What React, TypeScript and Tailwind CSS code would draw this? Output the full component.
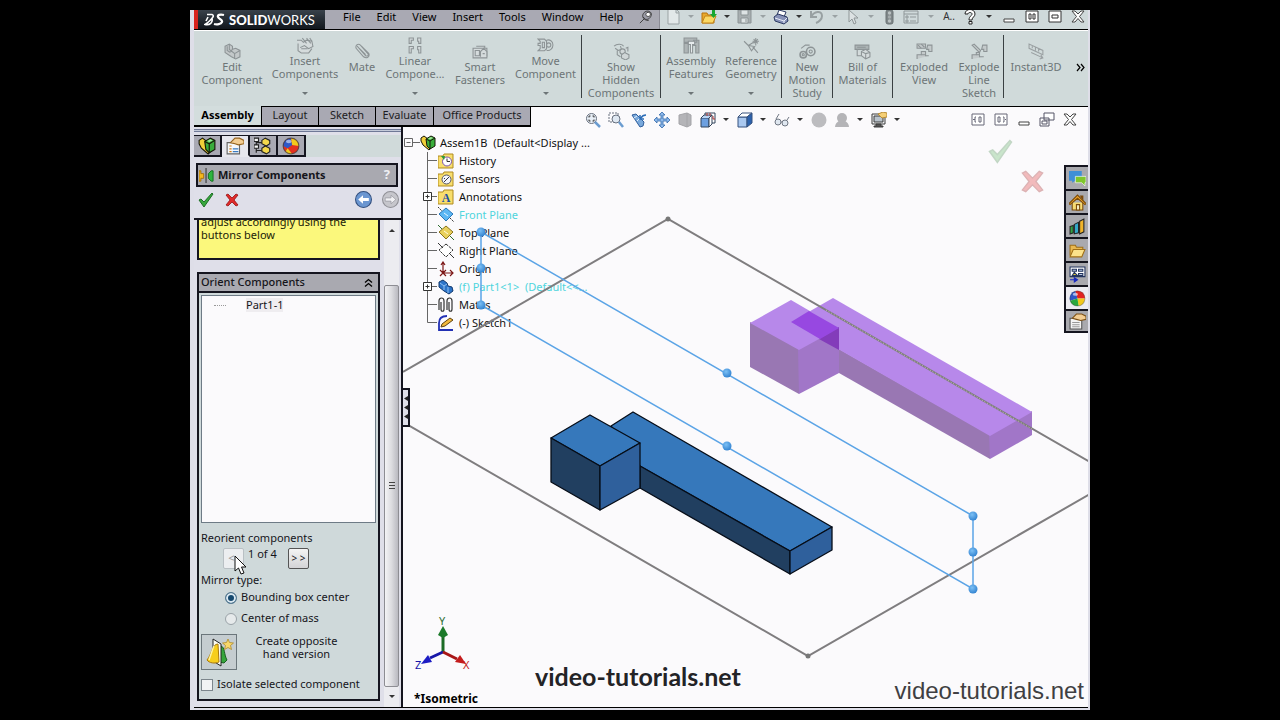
import React, { useState } from 'react';
import { clsx } from 'clsx';

type IconName = keyof typeof icons;

const icons = {
  // ribbon
  editPart: (
    <g fill="#c3c8c9" stroke="#8d9496">
      <path d="M1 3l4-2 3 2v3l3-1 4 2v6l-4 2-4-2-6-4z" />
      <path d="M5 1v5l5 4v5M10 10l5-3M3 3v4l3 2M8 6l-2 2" fill="none" />
    </g>
  ),
  insertPart: (
    <g fill="#d5dbdc" stroke="#8d9496">
      <path d="M1 6v7l3 2h7l3-4M0 3h4l2 2 3-2 5 1 1 5-4 2-4-3-4 2" />
      <path d="M5 1l4 5M9 1l4 5M12 1l2 3M4 11h6" fill="none" />
    </g>
  ),
  clip: (
    <path d="M3 3l8 9c2 1 3-1 2-2L6 2C4 0 1 2 2 5l7 8c3 2 6 0 5-3L7 3M5 5l6 6" fill="none" stroke="#8d9496" />
  ),
  pattern: (
    <g fill="#d5dbdc" stroke="#8d9496">
      <path d="M2 1h4v2H4v3H2zM10 1h3v5h-2V4h-1zM2 9h4v2H4v4H2zM10 9h3v6h-2v-3h-1z" />
    </g>
  ),
  smart: (
    <g fill="#d5dbdc" stroke="#8d9496">
      <path d="M1 5h13v9H1zM4 3h8v2" />
      <path d="M3 7h4v5H3zM8 13V8l3-3 3 3v5M10 10h2" />
    </g>
  ),
  move: (
    <g fill="none" stroke="#8d9496">
      <path d="M1 2h6l2 2v7l-2 2H1l2-2V8H1V6h2V4zM9 3c3-1 6 1 6 4.500s-3 6-6 5M5 5h2v5H5z" />
      <circle cx="11" cy="7.500" r="2" />
    </g>
  ),
  hidden: (
    <g fill="#d0d6d7" stroke="#8d9496">
      <path d="M1 3c3-3 8-2 9 0M2 5l3 2 3-1-1-3M4 7v4l3 2" fill="none" />
      <circle cx="9" cy="8" r="2.500" />
      <path d="M8 11l3-2 4 2v3l-3 2-4-2zM12 5l2-1v4" />
    </g>
  ),
  feature: (
    <g fill="#aeb5b6" stroke="#8d9496">
      <path d="M1 1h12v4H1zM1 6h4v9H1zM10 3h5v12h-3V8h-2z" />
      <path d="M5 4h6v3H9v8H7V7H5z" fill="#e6ebec" />
    </g>
  ),
  refGeo: (
    <g fill="none" stroke="#8d9496">
      <path d="M1 4l4 4 5-3M5 8l3 5 3-4zM9 9l5 6M12 1v7M9 4h6M10 2l4 4M14 2l-4 4" />
    </g>
  ),
  gears: (
    <g fill="none" stroke="#8d9496">
      <circle cx="11" cy="8" r="4" strokeWidth="1.500" />
      <circle cx="11" cy="8" r="1.500" />
      <circle cx="4" cy="11" r="3" strokeWidth="1.500" />
      <circle cx="4" cy="11" r="1" />
      <path d="M2 5l4-3 4 0" />
    </g>
  ),
  bom: (
    <g fill="#d5dbdc" stroke="#8d9496">
      <path d="M1 2h13v4H1z" fill="#adb4b5" />
      <path d="M3 4h8M3 6v6h4M7 8l4-2 4 3v4l-4 2-4-3zM11 10v5M7 8l4 2 4-1" />
    </g>
  ),
  explode: (
    <g fill="#c4cacb" stroke="#8d9496">
      <path d="M1 1h8v4H1zM11 2h4v6h-3V6h-2zM1 15v-4h4v-3h4v4h3" />
      <path d="M2 2l3 3M5 1l3 3M5 11h4" fill="none" />
    </g>
  ),
  explodeLine: (
    <g fill="#c4cacb" stroke="#8d9496">
      <path d="M1 2l2-1 6 6-1 2zM11 2h4v6h-3V6h-2zM1 15v-4h4v-2h3v4h4" />
      <path d="M5 11h3" fill="none" />
    </g>
  ),
  instant: (
    <path d="M1 1v4l13 6V7zM4 3v2M7 4v3M10 5v3M3 9l11 5M12 11l2 3-3 1" fill="none" stroke="#9aa0a2" />
  ),

  // title bar
  pin: (
    <g stroke="#333">
      <path d="M7 2c3-2 8 0 7 4s-5 6-8 4-2-6 1-8z" fill="#9b9ba6" />
      <path d="M9 3c2-1 4 0 4 2s-2 3-4 2-1-3 0-4z" fill="#fff" />
      <path d="M1 15l5-5M5 8c1 3 3 4 6 4" fill="none" />
    </g>
  ),
  newDoc: <path d="M3 0h8l3 3v12H3zM11 0v4h3" fill="#e2e8e9" stroke="#9ba3a5" />,
  open: (
    <g>
      <path d="M1 14V4h5l1 2h6v8z" fill="#e9a92c" stroke="#b8730d" />
      <path d="M1 14l3-7h11l-3 7z" fill="#fbd863" stroke="#c3851b" />
      <path d="M11 1h3v4h2l-3.500 4L9 5h2z" fill="#19a831" />
    </g>
  ),
  save: (
    <g stroke="#8c9496">
      <path d="M1 1h13v13H1z" fill="#a7aeb0" />
      <path d="M4 1h7v5H4zM4 9h7v5H4z" fill="#dde3e4" />
      <path d="M9 10v3" />
    </g>
  ),
  print: (
    <g stroke="#2c3a63">
      <path d="M4 6l2-5 7 2-2 5z" fill="#fff" />
      <path d="M1 8l4-3 9 3 1 4-4 3-9-3z" fill="#8792b8" />
      <path d="M2 9l9 3 3-3M11 12v2" fill="none" stroke="#e8ecf8" />
    </g>
  ),
  undo: <path d="M2 2v6h6M2 8C5 2 13 1 13 7c0 3-3 6-6 7" fill="none" stroke="#98a0a2" strokeWidth="2" />,
  arrow: <path d="M4 1v12l3-3 2 5 2-1-2-5h4z" fill="#dce2e3" stroke="#8f9799" />,
  light: (
    <g>
      <rect x="5" y="1" width="7" height="14" rx="2" fill="#7e8688" stroke="#6a7274" />
      <circle cx="8.500" cy="4" r="1.700" fill="#b9c0c1" />
      <circle cx="8.500" cy="8" r="1.700" fill="#a5acad" />
      <circle cx="8.500" cy="12" r="1.700" fill="#b9c0c1" />
    </g>
  ),
  list: (
    <g fill="none" stroke="#8f9799">
      <path d="M1 2h14v12H1zM1 5h14" />
      <path d="M3 7h2v2H3zM3 11h2v2H3zM7 8h6M7 12h6" />
    </g>
  ),
  help: (
    <g fill="none" stroke="#222">
      <path d="M3 5c0-6 10-6 10 0 0 3-3 3-3 6H7c0-4 3-4 3-6s-4-2-4 0z" fill="#fff" />
      <path d="M7 12.500h3v2.500H7z" fill="#fff" />
    </g>
  ),
  min: <path d="M3 10h10v3H3z" fill="#fff" stroke="#444" />,
  tile: <path d="M2 2h12v11H2zM5 5h2v5H5zM9 5h2v5H9z" fill="#fff" stroke="#333" />,
  max: <path d="M2 2h12v11H2zM5 6h6v3H5z" fill="#fff" stroke="#333" />,
  close: (
    <path d="M2 2h3l3 3 3-3h3L9.500 7.500 14 13h-3L8 9.500 5 13H2l4.500-5.500z" fill="#fff" stroke="#444" />
  ),

  // view toolbar
  zoomFit: (
    <g fill="none" stroke="#68707e">
      <circle cx="6.500" cy="6.500" r="5" fill="#e7eef6" />
      <path d="M4 5.500V4h1.500M7.500 4H9v1.500M9 7.500V9H7.500M5.500 9H4V7.500" stroke="#333" />
      <path d="M10 10l5 5" stroke="#6b9cd0" strokeWidth="2.500" />
    </g>
  ),
  zoomArea: (
    <g fill="none" stroke="#68707e">
      <path d="M1 1h9v9H1z" strokeDasharray="2 1" />
      <circle cx="8" cy="7" r="4" fill="#dfe8f2" />
      <path d="M11 10l4 5" stroke="#6b9cd0" strokeWidth="2.500" />
    </g>
  ),
  prevView: (
    <g>
      <path d="M1 3l4-1 8 8-1 4-3 1z" fill="#79a9dc" stroke="#315f9c" />
      <path d="M3 6l3-2M6 9l3-3" stroke="#e7f1fb" />
      <path d="M15 3c-2 0-4 1-5 3M9 3v4h4" fill="none" stroke="#2b6cb6" strokeWidth="1.500" />
    </g>
  ),
  pan: (
    <path
      d="M8 0l3 3H9v4h4V5l3 3-3 3V9H9v4h2l-3 3-3-3h2V9H3v2L0 8l3-3v2h4V3H5z"
      fill="#8db8ea"
      stroke="#3369ab"
      strokeWidth=".8"
    />
  ),
  section: <path d="M2 3l8-2 4 2v10l-4 2-8-3zM10 1v14" fill="#b4b4b8" stroke="#a4a4a8" />,
  orient: (
    <g stroke="#33445c">
      <path d="M5 1h10v10H5z" fill="#fff" />
      <path d="M1 6h8v9H1z" fill="#6da0e0" />
      <path d="M1 6l3-3h8L9 6" fill="#b9d4f3" />
      <path d="M9 15l3-3V3L9 6z" fill="#fff" />
      <path d="M7 1v3M10 1v3M13 4v3h2" fill="none" stroke="#b03535" />
    </g>
  ),
  cube: (
    <g stroke="#37527e">
      <path d="M1 5h9v10H1z" fill="#a9c8f0" />
      <path d="M1 5l4-4h10l-5 4z" fill="#fff" />
      <path d="M10 15l5-4V1l-5 4z" fill="#2c62ad" />
    </g>
  ),
  glasses: (
    <g fill="none" stroke="#6f7682">
      <circle cx="4" cy="10" r="3" fill="#dfe7f0" />
      <circle cx="11" cy="11" r="3" fill="#dfe7f0" />
      <path d="M2 7l3-5M13 8l2-3M7 10h1" />
    </g>
  ),
  sphere: <circle cx="8" cy="8" r="7.500" fill="#bcbcbf" />,
  scene: (
    <g fill="#b4b4b7">
      <circle cx="8" cy="6" r="5" />
      <path d="M1 15c0-3 2-5 4-6h6c2 1 4 3 4 6z" />
    </g>
  ),
  monitor: (
    <g stroke="#3c3c3c">
      <path d="M1 2h13v10H1z" fill="#f0f2f4" />
      <path d="M3 4h9v6H3z" fill="#b9c3cc" />
      <path d="M5 12h5v2h2v1H3v-1h2z" fill="#555" />
      <path d="M7 2l5-2 4 1v4l-5 1z" fill="#f5cf76" stroke="#b78c35" />
    </g>
  ),
  paneLeft: (
    <path d="M2 2h12v11H2zM6 5H5v5h1M9 5h2v5H9zM3 7.500h2" fill="#fff" stroke="#667" />
  ),
  paneRight: (
    <path d="M2 2h12v11H2zM10 5h1v5h-1M5 5h2v5H5zM12 7.500h1" fill="#fff" stroke="#667" />
  ),
  restore: <path d="M5 1h10v7H5zM1 6h9v8H1zM3 9h5v3H3z" fill="#fff" stroke="#556" />,

  // manager and tree
  assembly: (
    <g stroke="#171707">
      <path d="M1 3l3-2 4 3v5l4-1v4l-3 3-6-5-2-4z" fill="#f0cf39" />
      <path d="M6 4l5-3 4 2v8l-5 3-3-3z" fill="#39ad3a" />
      <path d="M6 4l4 2 5-3M10 6v8" fill="none" />
      <path d="M8 3.500l3-1.500 2 1-3 1.500z" fill="#a3e79d" stroke="none" />
    </g>
  ),
  propHand: (
    <g stroke="#666">
      <path d="M1 5h11v10H1z" fill="#f6f8fb" />
      <path d="M3 8h2M3 10.500h2M3 13h2" stroke="#d07a12" />
      <path d="M6 10.500h5M6 13h5" stroke="#3a7ac0" />
      <path d="M4 5l4-4h4l4 2v3l-5 1-3-1z" fill="#f3cd92" stroke="#96631d" />
    </g>
  ),
  config: (
    <g stroke="#222">
      <path d="M2 1v13M2 5h5M2 12h5" fill="none" />
      <path d="M0 1h4v3H0zM0 7h4v3H0z" fill="#f5f5f5" />
      <path d="M7 3l3-2 4 2v3l-3 2-4-2zM7 10l3-2 4 2v3l-3 2-4-2z" fill="#f4d94c" />
    </g>
  ),
  ball: (
    <g>
      <path d="M8 8L1 10A7 7 0 0 1 6 1z" fill="#2e58c7" />
      <path d="M8 8L6 1a7 7 0 0 1 9 7z" fill="#e2231f" />
      <path d="M8 8h7a7 7 0 0 1-6 7z" fill="#f2c91c" />
      <path d="M8 8l1 7a7 7 0 0 1-8-5z" fill="#2aa83d" />
      <circle cx="8" cy="8" r="7" fill="none" stroke="#40404055" />
      <ellipse cx="6" cy="4" rx="2.500" ry="1.500" fill="#ffffff99" />
    </g>
  ),
  ballRed: (
    <g>
      <circle cx="8" cy="8" r="7" fill="#e2301f" />
      <path d="M8 1a7 7 0 0 0-7 7l4 2 4-3z" fill="#2e58c7" />
      <path d="M8 1l1 6 6 1a7 7 0 0 0-7-7z" fill="#f2c91c" />
      <path d="M3 13l2-3 4 5a7 7 0 0 1-6-2z" fill="#f2c91c" />
      <circle cx="8" cy="8" r="7" fill="none" stroke="#333a" />
      <ellipse cx="6" cy="4" rx="2.500" ry="1.500" fill="#ffffff88" />
    </g>
  ),
  history: (
    <g>
      <path d="M0 15V3h5l1-2h9v14z" fill="#f8de6d" stroke="#b08a1f" />
      <circle cx="9" cy="8.500" r="4.500" fill="#fff" stroke="#7a52a8" />
      <path d="M9 5.500v3h3" fill="none" stroke="#333" />
      <path d="M3 3l3 4 1-4z" fill="#2c9a36" />
    </g>
  ),
  sensors: (
    <g>
      <path d="M0 15V3h5l1-2h9v14z" fill="#f8de6d" stroke="#b08a1f" />
      <circle cx="8.500" cy="8.500" r="4.500" fill="#f4f6fa" stroke="#556" />
      <path d="M6 11l5-5M6 7l1 1" stroke="#334" />
    </g>
  ),
  annot: (
    <g>
      <path d="M0 15V3h5l1-2h9v14z" fill="#f8de6d" stroke="#b08a1f" />
      <text x="8" y="13" textAnchor="middle" fontSize="12" fontWeight="bold" fontFamily="Liberation Serif, serif" fill="#1c4fa3">
        A
      </text>
    </g>
  ),
  planeBlue: (
    <g stroke="#2a77b8">
      <path d="M8 1l7 6-7 7-7-7z" fill="#5cb7f4" />
      <path d="M6 6l4 3" stroke="#e6f6ff" />
      <path d="M0 0l4 4M12 11l4 4" stroke="#333" strokeDasharray="2 1" />
    </g>
  ),
  planeGold: (
    <g stroke="#8a741c">
      <path d="M8 1l7 6-7 7-7-7z" fill="#e9d05d" />
      <path d="M6 6l4 3" stroke="#fffbe0" />
      <path d="M0 0l4 4M12 11l4 4" stroke="#2d6b2d" />
    </g>
  ),
  plane: (
    <g stroke="#333" fill="#fff">
      <path d="M8 1l7 6-7 7-7-7z" strokeDasharray="3 1" />
      <path d="M0 0l5 5M12 11l4 4" />
    </g>
  ),
  origin: (
    <g fill="none" stroke="#7c1717" strokeWidth="1.200">
      <path d="M5 1v11h10M3 4l2-3 2 3M12 9l3 3-3 3M2 9l6 6M2 15l6-6" />
    </g>
  ),
  part: (
    <g stroke="#12386d">
      <path d="M1 3l4-2 4 3 1 3 4 1 1 4-4 3-5-3-5-4z" fill="#2c74c9" />
      <path d="M2 4l4 3v4M6 7l3-2M10 8v6" fill="none" stroke="#8fc0f1" />
    </g>
  ),
  mates: (
    <g fill="none" stroke="#333" strokeWidth="1.200">
      <path d="M1 13V4c0-4 5-4 5 0v8c0 3-3 3-3 0V5M9 13V4c0-4 5-4 5 0v8c0 3-3 3-3 0V5" />
    </g>
  ),
  sketch: (
    <g>
      <path d="M9 1C3 1 1 4 1 8v7h14" fill="none" stroke="#2230b4" strokeWidth="1.800" />
      <path d="M4 9l8-6 3 2-8 6-4 1z" fill="#f2b93b" stroke="#5d4110" />
    </g>
  ),

  // property manager
  mirror: (
    <g>
      <path d="M0 3h2v3h3v5H2v3H0z" fill="#f6b91b" stroke="#a97208" />
      <path d="M15 3h-2l-3 3v5l3 3h2z" fill="#2fb53e" stroke="#146f20" />
      <path d="M7.500 0v16" stroke="#222" />
    </g>
  ),
  ok: <path d="M1 8l2-1 3 3 8-9 1 1-9 13z" fill="#37a83d" stroke="#1d6f24" />,
  cancel: (
    <path
      d="M2 3l2-1 4 4 4-4 2 1-4 5 4 5-2 1-4-4-4 4-2-1 4-5z"
      fill="#e02a2a"
      stroke="#951010"
      strokeWidth=".8"
    />
  ),
  back: (
    <g>
      <circle cx="8" cy="8" r="7.500" fill="#6b96d1" stroke="#34507f" />
      <path d="M3 8l4.500-4v2.500H13v3H7.500V12z" fill="#fff" />
    </g>
  ),
  forward: (
    <g>
      <circle cx="8" cy="8" r="7.500" fill="#c6c6cc" stroke="#909097" />
      <path d="M13 8L8.500 4v2.500H3v3h5.500V12z" fill="#f1f1f4" stroke="#909097" strokeWidth=".6" />
    </g>
  ),

  // task pane
  forum: (
    <g>
      <path d="M0 1h12v9H6l-3 2v-2H0z" fill="#3f8fd6" />
      <path d="M6 6h10v6h-1v3l-3-3H6z" fill="#7fc62d" stroke="#fff" strokeWidth=".6" />
    </g>
  ),
  home: (
    <g stroke="#7b4a08">
      <path d="M3 8v7h10V8" fill="#f7da72" />
      <path d="M0 9l8-8 8 8-1 1-7-6-7 6z" fill="#f2a72a" />
      <path d="M7 10h3v5H7z" fill="#f7ecc0" />
      <path d="M11 2h2v3z" fill="#c33" />
    </g>
  ),
  library: (
    <g stroke="#222">
      <path d="M1 8l3-1v7l-3 1z" fill="#33a444" />
      <path d="M5 6l4-2v10l-4 1z" fill="#35a9c9" />
      <path d="M10 3l4-2v12l-4 2z" fill="#f1b42a" />
    </g>
  ),
  folder: (
    <g stroke="#a06f17">
      <path d="M1 13V3h5l1 2h6v3" fill="#e9b850" />
      <path d="M1 14l3-7h11l-3 7z" fill="#fce28a" />
    </g>
  ),
  palette: (
    <g stroke="#23345f">
      <path d="M1 1h14v9H1z" fill="#fff" />
      <path d="M3 3h4v2H3zM9 3h4v2H9zM9 7h4v2H9z" fill="#b9c8e3" />
      <path d="M3 9l2-3 3 3z" fill="#e6cf3c" />
      <path d="M1 13h6M5 11l3 2-3 2z" stroke="#1a2bc0" fill="#1a2bc0" />
    </g>
  ),
  properties: (
    <g stroke="#555">
      <path d="M1 5h11v10H1z" fill="#f4f4f4" />
      <path d="M3 9h7M3 11h7M3 13h7" stroke="#999" />
      <path d="M3 5l4-4h5l4 2v3l-5 1-4-1z" fill="#f3cd92" stroke="#7c5016" />
    </g>
  ),
};

const Icon = ({ name, size = 16, className }: { name: IconName; size?: number; className?: string }) => (
  <svg width={size} height={size} viewBox="0 0 16 16" className={clsx('shrink-0', className)} aria-hidden="true">
    {icons[name]}
  </svg>
);

const Caret = ({ className }: { className?: string }) => (
  <svg width="6" height="4" viewBox="0 0 6 4" className={clsx('shrink-0', className)} aria-hidden="true">
    <path d="M0 0h6L3 3z" fill="currentColor" />
  </svg>
);

const menus = ['File', 'Edit', 'View', 'Insert', 'Tools', 'Window', 'Help'];

interface QuickItem {
  icon?: IconName;
  label: string;
  width: string;
  faded?: boolean;
}

const quickItems: QuickItem[] = [
  { icon: 'newDoc', label: 'New', width: 'w-5' },
  { label: 'New options', width: 'w-4', faded: true },
  { icon: 'open', label: 'Open', width: 'w-5' },
  { label: 'Open options', width: 'w-4' },
  { icon: 'save', label: 'Save', width: 'w-5' },
  { label: 'Save options', width: 'w-4', faded: true },
  { icon: 'print', label: 'Print', width: 'w-5' },
  { label: 'Print options', width: 'w-4' },
  { icon: 'undo', label: 'Undo', width: 'w-5' },
  { label: 'Undo options', width: 'w-4', faded: true },
  { icon: 'arrow', label: 'Select', width: 'w-5' },
  { label: 'Select options', width: 'w-4', faded: true },
  { icon: 'light', label: 'Rebuild', width: 'w-5' },
  { icon: 'list', label: 'Options', width: 'w-6' },
  { label: 'Options list', width: 'w-4', faded: true },
];

interface RibbonItem {
  icon: IconName;
  lines: string[];
  width: string;
  menu?: boolean;
}

const ribbon: RibbonItem[][] = [
  [
    { icon: 'editPart', lines: ['Edit', 'Component'], width: 'w-[76px]' },
    { icon: 'insertPart', lines: ['Insert', 'Components'], width: 'w-[70px]', menu: true },
    { icon: 'clip', lines: ['Mate'], width: 'w-[44px]' },
    { icon: 'pattern', lines: ['Linear', 'Compone...'], width: 'w-[62px]', menu: true },
    { icon: 'smart', lines: ['Smart', 'Fasteners'], width: 'w-[68px]' },
    { icon: 'move', lines: ['Move', 'Component'], width: 'w-[63px]', menu: true },
  ],
  [{ icon: 'hidden', lines: ['Show', 'Hidden', 'Components'], width: 'w-[78px]' }],
  [
    { icon: 'feature', lines: ['Assembly', 'Features'], width: 'w-[60px]', menu: true },
    { icon: 'refGeo', lines: ['Reference', 'Geometry'], width: 'w-[60px]', menu: true },
  ],
  [{ icon: 'gears', lines: ['New', 'Motion', 'Study'], width: 'w-[50px]' }],
  [{ icon: 'bom', lines: ['Bill of', 'Materials'], width: 'w-[59px]' }],
  [
    { icon: 'explode', lines: ['Exploded', 'View'], width: 'w-[62px]' },
    { icon: 'explodeLine', lines: ['Explode', 'Line', 'Sketch'], width: 'w-[48px]' },
  ],
  [{ icon: 'instant', lines: ['Instant3D'], width: 'w-[64px]' }],
];

const tabs = [
  { label: 'Assembly', width: 'w-[68px]' },
  { label: 'Layout', width: 'w-[57px]' },
  { label: 'Sketch', width: 'w-[57px]' },
  { label: 'Evaluate', width: 'w-[58px]' },
  { label: 'Office Products', width: 'w-[97px]' },
];

const viewTools: { icon: IconName; label: string; menu?: boolean }[] = [
  { icon: 'zoomFit', label: 'Zoom to fit' },
  { icon: 'zoomArea', label: 'Zoom to area' },
  { icon: 'prevView', label: 'Previous view' },
  { icon: 'pan', label: 'Pan' },
  { icon: 'section', label: 'Section view' },
  { icon: 'orient', label: 'View orientation', menu: true },
  { icon: 'cube', label: 'Display style', menu: true },
  { icon: 'glasses', label: 'Hide or show items', menu: true },
  { icon: 'sphere', label: 'Edit appearance' },
  { icon: 'scene', label: 'Apply scene', menu: true },
  { icon: 'monitor', label: 'View settings', menu: true },
];

const tree: { icon: IconName; label: string; expandable?: boolean; picked?: boolean }[] = [
  { icon: 'history', label: 'History' },
  { icon: 'sensors', label: 'Sensors' },
  { icon: 'annot', label: 'Annotations', expandable: true },
  { icon: 'planeBlue', label: 'Front Plane', picked: true },
  { icon: 'planeGold', label: 'Top Plane' },
  { icon: 'plane', label: 'Right Plane' },
  { icon: 'origin', label: 'Origin' },
  { icon: 'part', label: '(f) Part1<1>  (Default<<...', expandable: true, picked: true },
  { icon: 'mates', label: 'Mates' },
  { icon: 'sketch', label: '(-) Sketch1' },
];

const taskPane: { icon: IconName; label: string; light?: boolean }[] = [
  { icon: 'forum', label: 'Forum' },
  { icon: 'home', label: 'Resources' },
  { icon: 'library', label: 'Design library' },
  { icon: 'folder', label: 'File explorer' },
  { icon: 'palette', label: 'View palette' },
  { icon: 'ball', label: 'Appearances', light: true },
  { icon: 'properties', label: 'Custom properties' },
];

const TitleBar = () => (
  <header className="flex h-[19px] shrink-0 overflow-hidden bg-[#cfd9da]">
    <div className="flex w-[131px] shrink-0 items-center gap-1 border-l-4 border-[#d8231d] bg-gradient-to-b from-[#39424b] to-[#12171d] pl-1.5 text-white">
      <svg width="21" height="14" viewBox="0 0 21 14" fill="none" stroke="#fff" aria-hidden="true">
        <path d="M3 1.500h5c3 1 0 4-2 6-2 2-3 3-5 4 5 1 8-2 7-6M4 4L2 8" strokeWidth="1.600" />
        <path d="M20 2c-4-1-7 0-6 2s5 3 4 5-5 3-8 2" strokeWidth="2.200" />
      </svg>
      <span className="font-['Lato',sans-serif] text-[13px] leading-4">
        <b className="font-black">SOLID</b>WORKS
      </span>
    </div>
    <nav className="flex w-[335px] shrink-0 items-center gap-4 border-r border-[#8b8b95] bg-[#a9a9b3] pb-1.5 pl-[18px] text-[11px] leading-4 text-black">
      {menus.map(m => (
        <button key={m}>{m}</button>
      ))}
      <button aria-label="Pin menu">
        <Icon name="pin" size={14} />
      </button>
    </nav>
    <div className="flex min-w-0 flex-1 items-center pb-1.5 pl-[3px] text-[10px] text-[#333]">
      {quickItems.map(q => (
        <button
          key={q.label}
          aria-label={q.label}
          className={clsx('flex shrink-0 items-center justify-center', q.width, q.faded && 'text-[#9aa2a4]')}
        >
          {q.icon ? <Icon name={q.icon} /> : <Caret />}
        </button>
      ))}
      <span className="w-5 shrink-0 text-center">A..</span>
      <button aria-label="Help" className="flex w-[22px] shrink-0 justify-center">
        <Icon name="help" />
      </button>
      <button aria-label="Help options" className="flex w-4 shrink-0 justify-center">
        <Caret />
      </button>
      <div className="ml-auto flex">
        {(['min', 'tile', 'max', 'close'] as IconName[]).map(n => (
          <button key={n} aria-label={n} className="flex w-[23px] justify-center">
            <Icon name={n} />
          </button>
        ))}
      </div>
    </div>
  </header>
);

const Ribbon = () => (
  <div className="flex h-[76px] shrink-0 border-t border-white bg-[#d0dada] pt-1 pb-2 text-[11px] leading-[13px] text-[#6d7577]">
    {ribbon.map((group, i) => (
      <div
        key={i}
        className={clsx('flex shrink-0', i === 0 && 'pr-1', i < ribbon.length - 1 && 'border-r border-[#3a4042]')}
      >
        {group.map(item => (
          <button
            key={item.lines.join(' ')}
            className={clsx('flex flex-col items-center', item.width, item.menu ? 'pt-0.5' : 'pt-2')}
          >
            <Icon name={item.icon} size={17} />
            {item.lines.map(l => (
              <span key={l}>{l}</span>
            ))}
            {item.menu && <Caret className="mt-3" />}
          </button>
        ))}
      </div>
    ))}
    <button aria-label="More commands" className="ml-auto flex w-4 justify-center pt-7 text-black">
      <svg width="9" height="9" viewBox="0 0 9 9" fill="none" stroke="currentColor" strokeWidth="1.200" aria-hidden="true">
        <path d="M1 1l3 3.500L1 8M5 1l3 3.500L5 8" />
      </svg>
    </button>
  </div>
);

const TabRow = () => {
  const [active, setActive] = useState('Assembly');
  return (
    <div className="relative z-10 flex h-5 shrink-0">
      <div className="flex shrink-0 text-[11px] leading-4">
        {tabs.map(t => (
          <button
            key={t.label}
            onClick={() => setActive(t.label)}
            className={clsx(
              'border-r border-b-2 border-black pb-0.5 whitespace-nowrap',
              t.width,
              active === t.label ? '-mt-px bg-[#d3dddd] font-bold text-black' : 'bg-[#a9a9b3] text-[#1c1c22]'
            )}
          >
            {t.label}
          </button>
        ))}
      </div>
      <div className="flex h-[26px] flex-1 items-center pr-[7px] pl-[50px] text-[#333]">
        {viewTools.map(v => (
          <button key={v.label} aria-label={v.label} className="flex shrink-0 items-center">
            <span className="flex w-[23px] justify-center">
              <Icon name={v.icon} />
            </span>
            {v.menu && (
              <span className="flex w-3.5 justify-center">
                <Caret />
              </span>
            )}
          </button>
        ))}
        <div className="ml-auto flex">
          {(['paneLeft', 'paneRight', 'min', 'restore', 'close'] as IconName[]).map(n => (
            <button key={n} aria-label={n} className="flex w-[23px] justify-center">
              <Icon name={n} />
            </button>
          ))}
        </div>
      </div>
    </div>
  );
};

const ScrollBar = () => (
  <div className="mr-0.5 flex w-[15px] shrink-0 flex-col bg-[#ececf0] text-[#333]">
    <button aria-label="Scroll up" className="flex h-5 items-center justify-center">
      <Caret className="rotate-180" />
    </button>
    <div className="flex flex-1 flex-col pt-[45px]">
      <div className="flex flex-1 items-center justify-center rounded-xs border border-[#8d8d93] bg-gradient-to-r from-[#f4f4f6] via-[#dcdce0] to-[#b9b9c0]">
        <svg width="6" height="8" viewBox="0 0 6 8" stroke="#444" aria-hidden="true">
          <path d="M0 .5h6M0 3.500h6M0 6.500h6" />
        </svg>
      </div>
    </div>
    <button aria-label="Scroll down" className="flex h-5 items-center justify-center">
      <Caret />
    </button>
  </div>
);

const OrientGroup = () => {
  const [mode, setMode] = useState('box');
  return (
    <section className="flex flex-1 flex-col border-2 border-t-0 border-[#15151f] bg-[#cfd9da] text-[#15151a]">
      <h3 className="flex h-[21px] items-center justify-between border-y-2 border-[#15151f] bg-[#a9a9b0] pr-1 pl-0.5 font-medium">
        Orient Components
        <svg width="11" height="10" viewBox="0 0 11 10" fill="none" stroke="#000" strokeWidth="1.300" aria-hidden="true">
          <path d="M2 4.500l3.500-3L9 4.500M2 8.500l3.500-3L9 8.500" />
        </svg>
      </h3>
      <div className="flex flex-1 flex-col px-0.5 pt-0.5">
        <ul className="flex-1 border border-[#6e7b86] bg-[#fbfafc] pt-0.5 leading-[14px]">
          <li className="flex items-center gap-5 pl-3">
            <span className="w-3 border-t border-dotted border-[#999]" />
            <span className="bg-[#efedf0]">Part1-1</span>
          </li>
        </ul>
        <p className="pt-2 leading-[14px]">Reorient components</p>
        <div className="flex h-7 pt-[3px] pl-[22px]">
          <button className="h-[21px] w-[21px] rounded-xs border border-[#b9c0c4] bg-[#eceef0] pr-1 text-[#999]">&lt;</button>
          <span className="w-[44px] pl-1 leading-3">1 of 4</span>
          <button className="h-[21px] w-[21px] rounded-xs border border-[#555] bg-gradient-to-b from-[#f4f4f4] to-[#d4d4d6] text-[10px] whitespace-nowrap">
            &gt; &gt;
          </button>
        </div>
        <p className="leading-[14px]">Mirror type:</p>
        {[
          { id: 'box', label: 'Bounding box center' },
          { id: 'mass', label: 'Center of mass' },
        ].map(o => (
          <label key={o.id} className="flex h-[21px] items-center gap-1 pl-6">
            <input
              type="radio"
              name="mirror-type"
              checked={mode === o.id}
              onChange={() => setMode(o.id)}
              className="size-3 appearance-none rounded-full border border-[#9aa3a8] bg-[#e6eaeb] checked:border-[#5b7d93] checked:bg-[#15496e] checked:shadow-[inset_0_0_0_2px_#dbe9f2]"
            />
            {o.label}
          </label>
        ))}
        <div className="flex items-center pt-[5px]">
          <button
            aria-label="Create opposite hand version"
            className="flex size-9 shrink-0 items-center justify-center border border-[#6b767b] bg-[#c5cdd0]"
          >
            <svg width="32" height="32" viewBox="0 0 32 32" aria-hidden="true">
              <path d="M18 10c4 1 3 9 6 14l-3 3-5-1z" fill="#36a63d" stroke="#185f1f" />
              <path d="M10 3l8 5v22l-8-5z" fill="#fdfdf2" stroke="#222" />
              <path d="M15 8c-6 0-6 10-11 16 2 3 8 4 12 2z" fill="#f7ce1c" stroke="#a9780c" />
              <path d="M11 10c-2 4-3 9-5 14" fill="none" stroke="#fdf3a3" strokeWidth="1.500" />
              <path d="M25 3l1.500 3.500 4 .5-3 2.500 1 4L25 11.500l-3.500 2 1-4-3-2.500 4-.5z" fill="#f7d76a" stroke="#b08a2a" strokeWidth=".8" />
            </svg>
          </button>
          <p className="flex-1 pr-5 pb-2.5 text-center leading-[13px]">
            Create opposite
            <br />
            hand version
          </p>
        </div>
        <label className="flex h-[29px] items-center gap-1 whitespace-nowrap">
          <input type="checkbox" className="size-3 appearance-none border border-[#7c868c] bg-[#f1f3f4]" />
          Isolate selected component
        </label>
      </div>
    </section>
  );
};

const PropertyPanel = () => (
  <aside className="flex w-[209px] shrink-0 flex-col border-r-2 border-[#15151f] bg-[#dfdfe9] pt-[2px] text-[11px]">
    <div className="h-[3px] border-y border-[#6f7896] bg-[#c4cad9]" />
    <div className="mt-[3px] flex h-[22px] bg-[#d0dada]">
      {(['assembly', 'propHand', 'config', 'ballRed'] as IconName[]).map((n, i) => (
        <button
          key={n}
          aria-label={n}
          className={clsx(
            'flex w-7 items-center justify-center border-t border-r-2 border-b-2 border-[#15151f]',
            i === 1 ? 'border-b-transparent bg-[#e7e7ee]' : 'bg-[#a9a9b3]'
          )}
        >
          <Icon name={n} size={18} />
        </button>
      ))}
    </div>
    <h2 className="mr-[3px] ml-0.5 mt-1.5 flex h-6 items-center gap-1 border-2 border-[#15151f] bg-[#a9a9b0] pr-1 pl-px font-bold text-[#15151a]">
      <Icon name="mirror" size={15} />
      Mirror Components
      <button aria-label="Help" className="ml-auto pr-0.5 text-[13px] font-bold text-[#efeff3]">
        ?
      </button>
    </h2>
    <div className="flex h-[31px] shrink-0 items-center gap-2.5 pr-0.5 pb-1.5 pl-1">
      <button aria-label="OK">
        <Icon name="ok" />
      </button>
      <button aria-label="Cancel" className="mr-auto">
        <Icon name="cancel" />
      </button>
      <button aria-label="Back">
        <Icon name="back" size={17} />
      </button>
      <button aria-label="Next">
        <Icon name="forward" size={17} />
      </button>
    </div>
    <div className="flex min-h-0 flex-1 overflow-hidden border-t-2 border-[#15151f] pl-[3px]">
      <div className="flex flex-1 flex-col pb-1.5">
        <div className="h-[40px] shrink-0 overflow-hidden border-2 border-t-0 border-[#15151f] bg-[#fbf87c] px-0.5 leading-[13px] text-[#222208]">
          <p className="-mt-[5px]">
            adjust accordingly using the
            <br />
            buttons below
          </p>
        </div>
        <div className="h-3 shrink-0" />
        <OrientGroup />
      </div>
      <div className="w-1 shrink-0" />
      <ScrollBar />
    </div>
  </aside>
);

const FeatureTree = () => (
  <ul className="pt-[7px] pl-px text-[11px] leading-[18px] text-[#111]">
    <li className="flex h-[18px] items-center">
      <svg width="16" height="18" viewBox="0 0 16 18" fill="none" stroke="#666" aria-hidden="true">
        <path d="M.5 4.500h8v8h-8zM2.500 8.500h4M9 8.500h7" />
      </svg>
      <Icon name="assembly" />
      <span className="pl-1 whitespace-pre">Assem1B  (Default&lt;Display ...</span>
    </li>
    {tree.map((n, i) => (
      <li key={n.label} className="flex h-[18px] items-center pl-[18px]">
        <svg width="16" height="18" viewBox="0 0 16 18" fill="none" stroke="#666" aria-hidden="true">
          <path d={i === tree.length - 1 ? 'M5.500 0v8.500H15' : 'M5.500 0v18M5.500 8.500H15'} />
          {n.expandable && <path d="M1.500 4.500h8v8h-8zM3.500 8.500h4M5.500 6.500v4" fill="#fff" stroke="#333" />}
        </svg>
        <Icon name={n.icon} />
        <span className={clsx('pl-[5px] whitespace-pre', n.picked && 'text-[#4fd5dc]')}>{n.label}</span>
      </li>
    ))}
  </ul>
);

const handles = [
  [481, 232],
  [481, 268],
  [481, 305],
  [727, 373],
  [727, 446],
  [973, 516],
  [973, 552],
  [973, 589],
];

// Model space is drawn in window coordinates, shifted to the viewport's corner
const Scene = () => (
  <svg className="pointer-events-none absolute inset-0 size-full overflow-hidden" aria-hidden="true">
    <defs>
      <radialGradient id="handle" cx=".4" cy=".35" r=".7">
        <stop offset="0" stopColor="#7cc0f5" />
        <stop offset="1" stopColor="#2f80cf" />
      </radialGradient>
    </defs>
    <g transform="translate(-403 -127)">
      {/* mirrored preview */}
      <polygon points="839,349 990,435 990,459 839,373" fill="#9977b3" />
      <polygon points="989,435 1032,411 1032,435 990,459" fill="#a176c8" />
      <polygon points="833,298 1032,412 990,436 791,322" fill="#b788ea" />
      <polygon points="750,322 799,349 799,394 750,367" fill="#9977b3" />
      <polygon points="798,349 839,327 839,373 799,394" fill="#a176c8" />
      <polygon points="791,300 839,328 799,350 750,323" fill="#b788ea" />
      <polygon points="839,327 839,350 819,339" fill="#833cba" />
      <polygon points="809,311 839,328 820,339 791,322" fill="#9748e1" />

      {/* reference plane */}
      <path d="M403 372L668 219L1090 462M1090 494L808 656L403 422" fill="none" stroke="#7f7d7f" strokeWidth="2" />
      <path d="M826 310L1032 429" stroke="#d9cfc0" strokeWidth=".8" strokeDasharray="1 2" />
      <circle cx="668" cy="219" r="2.500" fill="#777" />
      <circle cx="808" cy="656" r="2.500" fill="#777" />

      {/* solid part */}
      <g stroke="#060d18" strokeWidth="1.300" strokeLinejoin="round">
        <polygon points="633,412 832,527 790,551 640,466 611,426" fill="#3678bb" />
        <polygon points="640,466 790,551 790,574 640,488" fill="#213f60" />
        <polygon points="790,551 832,527 832,550 790,574" fill="#2f609c" />
        <polygon points="590,415 640,443 600,466 551,438" fill="#3678bb" />
        <polygon points="551,438 600,466 600,510 551,482" fill="#213f60" />
        <polygon points="600,466 640,443 640,488 600,510" fill="#2f609c" />
      </g>

      {/* front plane with its handles */}
      <path d="M481 232L973 516V589L481 305z" fill="none" stroke="#5ba4e6" strokeWidth="1.500" />
      {handles.map(([x, y]) => (
        <circle key={`${x}-${y}`} cx={x} cy={y} r="4.500" fill="url(#handle)" />
      ))}

      {/* axis triad */}
      <g strokeWidth="3">
        <path d="M443 652V634" stroke="#1c6b26" />
        <path d="M443 652l-13 6" stroke="#1717a8" />
        <path d="M443 652l14 7" stroke="#a81616" />
      </g>
      <path d="M443 626l5 9-5 3-5-3z" fill="#1c7a2a" />
      <path d="M421 664l7-9 4 7z" fill="#1c1cc4" />
      <path d="M466 664l-6-9-5 7z" fill="#c41c1c" />
      <g fontFamily="Noto Sans, sans-serif" fontSize="11">
        <text x="439" y="625" fill="#2f6e35">Y</text>
        <text x="415" y="669" fill="#1717a8">Z</text>
        <text x="463" y="669" fill="#c41c1c">X</text>
      </g>
    </g>
  </svg>
);

const Viewport = () => (
  <main className="relative min-w-0 flex-1 overflow-hidden">
    <FeatureTree />
    <Scene />
    <button aria-label="Confirm" className="absolute top-3 right-[75px] opacity-25">
      <Icon name="ok" size={25} />
    </button>
    <button aria-label="Discard" className="absolute top-[41px] right-[42px] opacity-30">
      <Icon name="cancel" size={27} />
    </button>
    <div className="absolute top-[38px] right-0 w-[24px] border-l-2 border-[#15151f]">
      {taskPane.map(t => (
        <button
          key={t.label}
          aria-label={t.label}
          className={clsx(
            'flex h-6 w-full items-center justify-center border-t-2 border-[#15151f] last:border-b-2',
            t.light ? 'bg-[#ececf1]' : 'bg-[#a9a9ae]'
          )}
        >
          <Icon name={t.icon} size={17} />
        </button>
      ))}
    </div>
    <button
      aria-label="Collapse panel"
      className="absolute top-[261px] left-0 flex h-[39px] w-[7px] flex-col items-center justify-around border-2 border-l-0 border-[#15151f] bg-[#dfdfe9] py-1"
    >
      {[0, 1, 2].map(i => (
        <svg key={i} width="4" height="5" viewBox="0 0 4 5" aria-hidden="true">
          <path d="M4 0v5L0 2.500z" fill="#222" />
        </svg>
      ))}
    </button>
    <p className="absolute bottom-0 left-[11px] text-[12px] leading-4 font-bold text-black">*Isometric</p>
    <p className="absolute bottom-[15px] left-[132px] font-['Lato',sans-serif] text-[25px] leading-8 font-bold text-[#232326]">
      video-tutorials.net
    </p>
    <p className="absolute right-1 bottom-0 font-['Liberation_Sans',sans-serif] text-[24px] leading-8 text-[#3f3f42]">
      video-tutorials.net
    </p>
  </main>
);

const Pointer = () => (
  <svg className="pointer-events-none absolute top-[555px] left-[234px] z-20" width="13" height="20" viewBox="0 0 13 20" aria-hidden="true">
    <path d="M1 1v15l3.500-3 2.500 6 3-1-2.500-6H12z" fill="#fff" stroke="#111" />
  </svg>
);

export default function App() {
  return (
    <div className="relative h-screen bg-black px-[190px] py-2.5 font-['Noto_Sans',sans-serif]">
      <div className="flex h-full flex-col border-r-2 border-b-2 border-l-4 border-[#dedee8] bg-[#fbfafc]">
        <TitleBar />
        <div className="flex min-h-0 flex-1 flex-col border-y border-black">
          <Ribbon />
          <div className="flex min-h-0 flex-1 flex-col border-t border-black">
            <TabRow />
            <div className="flex min-h-0 flex-1">
              <PropertyPanel />
              <Viewport />
            </div>
          </div>
        </div>
      </div>
      <Pointer />
    </div>
  );
}
